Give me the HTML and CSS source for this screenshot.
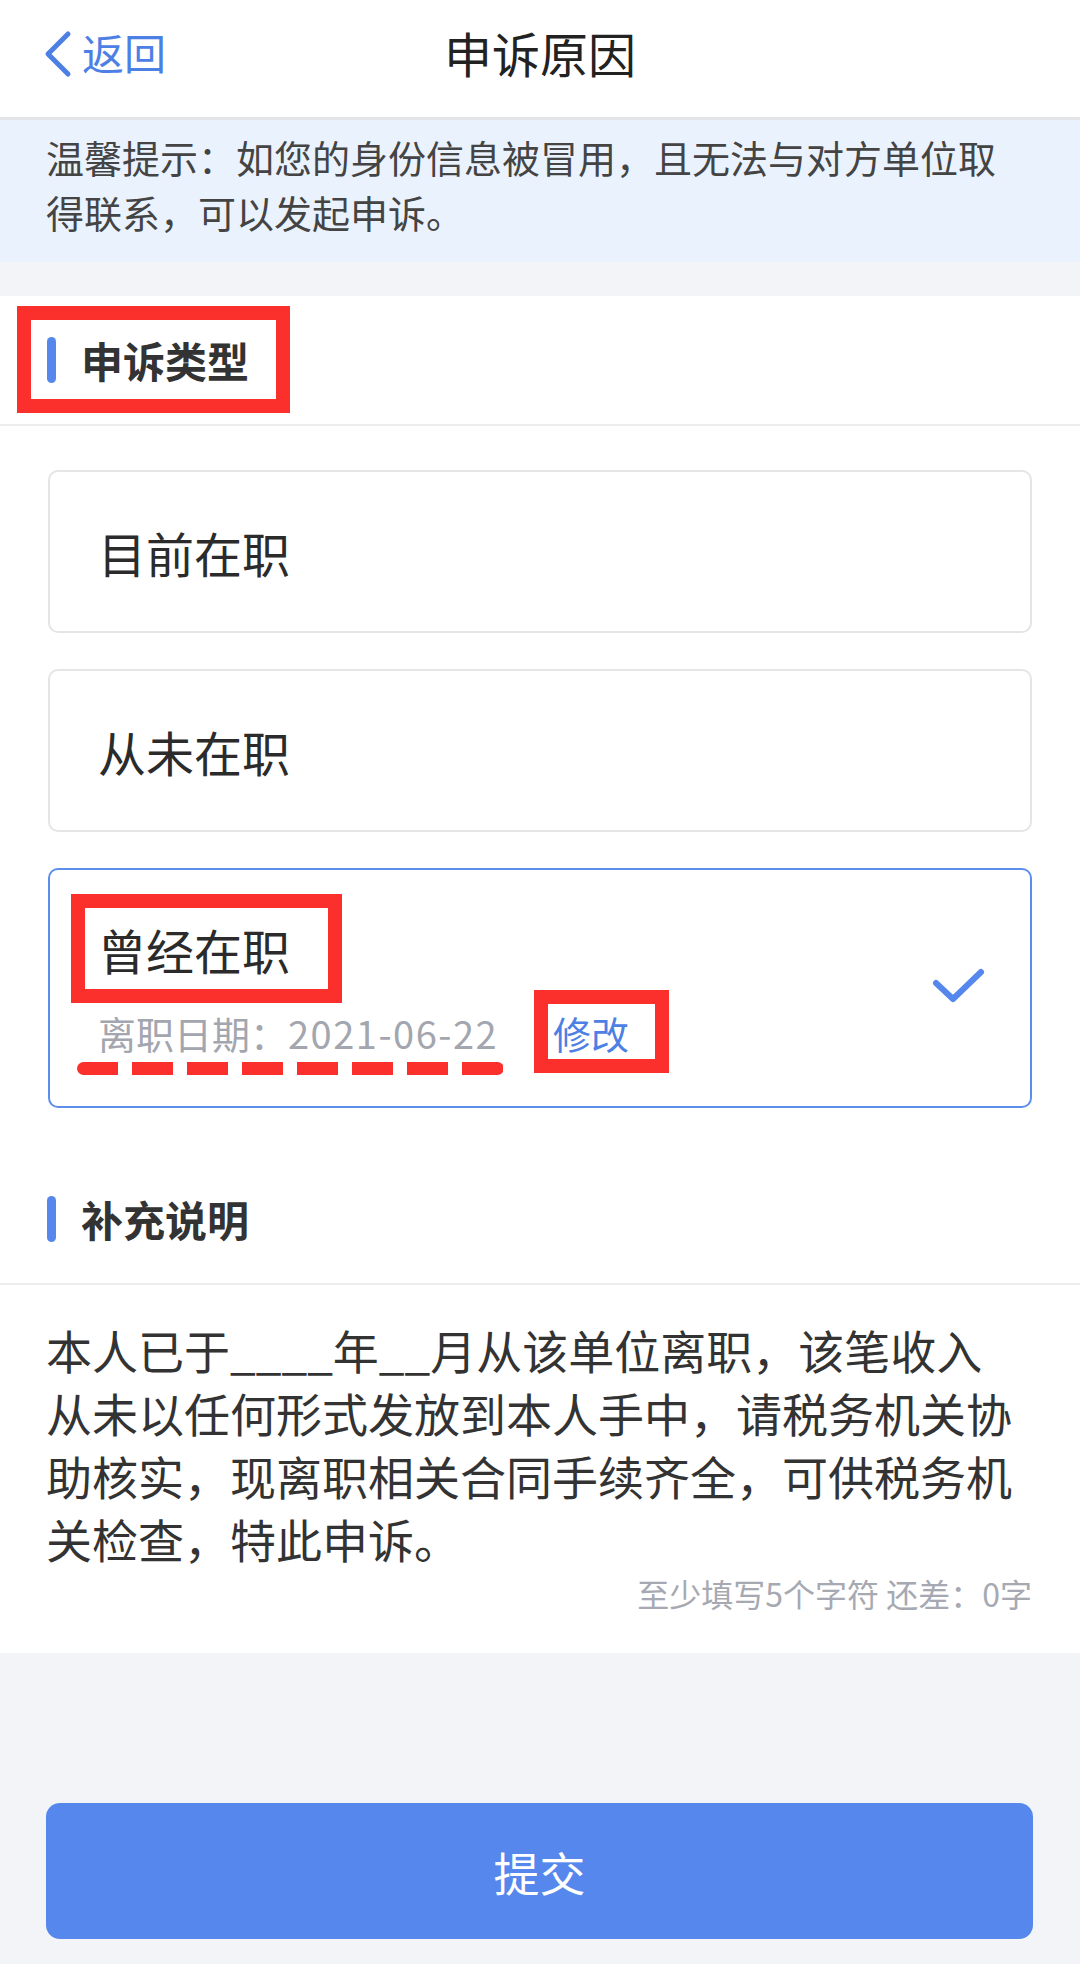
FILE: index.html
```html
<!DOCTYPE html>
<html lang="zh-CN">
<head>
<meta charset="utf-8">
<title>申诉原因</title>
<link rel="stylesheet" href="styles.css">
</head>
<body>
<div class="page">
  <header class="nav">
    <a class="back">
      <svg class="back-icon" width="30" height="48" viewBox="0 0 30 48"><path d="M26 4 L6 24 L26 44" fill="none" stroke="#4d80e4" stroke-width="5" stroke-linecap="round" stroke-linejoin="round"/></svg>
      <span class="back-text">返回</span>
    </a>
    <h1 class="title">申诉原因</h1>
    <span class="nav-spacer"></span>
  </header>

  <div class="tip">温馨提示：如您的身份信息被冒用，且无法与对方单位取得联系，可以发起申诉。</div>

  <section class="panel">
    <div class="sec-head anno-head">
      <i class="bar"></i><span class="sec-title">申诉类型</span>
    </div>

    <div class="options">
      <div class="opt"><span class="opt-label">目前在职</span></div>
      <div class="opt"><span class="opt-label">从未在职</span></div>
      <div class="opt opt-active">
        <div class="opt-main">
          <span class="opt-label anno-title">曾经在职</span>
          <div class="opt-sub">
            <span class="date anno-dash">离职日期：<span class="num">2021-06-22</span></span><a class="edit anno-edit">修改</a>
          </div>
        </div>
        <svg class="check" width="56" height="40" viewBox="0 0 56 40"><path d="M6 17 L23 33 L51 6" fill="none" stroke="#5587ec" stroke-width="6" stroke-linecap="round" stroke-linejoin="round"/></svg>
      </div>
    </div>

    <div class="sec-head sec-head-2">
      <i class="bar"></i><span class="sec-title">补充说明</span>
    </div>

    <div class="remark">
      <p class="remark-text">本人已于____年__月从该单位离职，该笔收入<br>从未以任何形式发放到本人手中，请税务机关协<br>助核实，现离职相关合同手续齐全，可供税务机<br>关检查，特此申诉。</p>
      <div class="counter">至少填写5个字符 还差：0字</div>
    </div>
  </section>

  <div class="footer">
    <button class="submit">提交</button>
  </div>
</div>
</body>
</html>
```

FILE: styles.css
```css
*,
*::before,
*::after {
  box-sizing: border-box;
}

html, body {
  margin: 0;
  padding: 0;
}

body {
  background: #f3f4f8;
  font-family: "Noto Sans CJK SC", "Noto Sans", sans-serif;
  color: #333;
}

.page {
  width: 1080px;
  min-height: 1964px;
  background: #f3f4f8;
}

/* ---------- nav ---------- */
.nav {
  height: 120px;
  background: #fff;
  border-bottom: 3px solid #e3e4e8;
  display: grid;
  grid-template-columns: 1fr auto 1fr;
  align-items: center;
  padding-bottom: 14px;
}

.back {
  display: flex;
  align-items: center;
  padding-left: 42px;
  color: #4d80e4;
}

.back-icon {
  display: block;
  margin-top: 4px;
}

.back-text {
  margin-left: 10px;
  font-size: 42px;
  line-height: 48px;
}

.title {
  margin: 0;
  font-size: 48px;
  line-height: 60px;
  font-weight: 400;
  color: #222;
}

/* ---------- tip ---------- */
.tip {
  background: #eaf2fd;
  padding: 9px 60px 23px 46px;
  font-size: 38px;
  line-height: 55px;
  color: #444;
  height: 142px;
}

/* ---------- panel ---------- */
.panel {
  margin-top: 34px;
  background: #fff;
}

.sec-head {
  position: relative;
  height: 130px;
  display: flex;
  align-items: center;
  padding-left: 47px;
  border-bottom: 2px solid #ededf0;
}

.sec-head-2 {
  margin-top: 47px;
}

.bar {
  display: block;
  width: 9px;
  height: 46px;
  border-radius: 5px;
  background: #5587ec;
}

.sec-title {
  margin-left: 25px;
  font-size: 42px;
  font-weight: 700;
  color: #333;
  line-height: 50px;
}

/* ---------- options ---------- */
.options {
  padding: 44px 48px 0;
  display: flex;
  flex-direction: column;
  gap: 36px;
}

.opt {
  height: 163px;
  border: 2px solid #e5e5e8;
  border-radius: 10px;
  display: flex;
  align-items: center;
  padding: 0 44px 0 48px;
}

.opt-label {
  font-size: 48px;
  line-height: 60px;
  color: #2b2b2b;
}

.opt-active {
  height: 240px;
  border-color: #5c8eeb;
  justify-content: space-between;
  align-items: center;
}

.opt-main {
  display: flex;
  flex-direction: column;
  align-items: flex-start;
}

.opt-sub {
  margin-top: 29px;
  display: flex;
  align-items: center;
  font-size: 38px;
  line-height: 50px;
}

.date {
  color: #a3a6ae;
}

.num {
  letter-spacing: 1.5px;
}

.edit {
  margin-left: 55px;
  color: #4d80e4;
}

.check {
  display: block;
  margin-top: -4px;
}

/* ---------- remark ---------- */
.remark {
  padding: 33px 48px 40px 46px;
}

.remark-text {
  margin: 0;
  font-size: 46px;
  line-height: 63px;
  color: #333;
  white-space: nowrap;
}

.counter {
  margin-top: 3px;
  text-align: right;
  font-size: 32px;
  line-height: 40px;
  color: #a6a9b1;
}

/* ---------- footer ---------- */
.footer {
  padding: 150px 47px 0 46px;
}

.submit {
  display: block;
  width: 100%;
  height: 136px;
  border: none;
  border-radius: 14px;
  background: #5587ec;
  color: #fff;
  font-family: "Noto Sans CJK SC", sans-serif;
  font-size: 46px;
}

/* ---------- red annotations (overlays) ---------- */
.anno-head::after,
.anno-title::after,
.anno-edit::after,
.anno-dash::after {
  content: "";
  position: absolute;
  pointer-events: none;
}

.anno-head::after {
  left: 17px;
  top: 10px;
  width: 273px;
  height: 107px;
  border: 14px solid #fb2f2b;
}

.anno-title,
.anno-edit,
.anno-dash {
  position: relative;
}

.anno-title::after {
  left: -27px;
  top: -25px;
  width: 271px;
  height: 109px;
  border: 14px solid #fb2f2b;
}

.anno-edit::after {
  left: -19px;
  top: -18px;
  width: 135px;
  height: 83px;
  border: 14px solid #fb2f2b;
}

.anno-dash::after {
  left: -21px;
  top: 54px;
  width: 427px;
  height: 13px;
  border-radius: 7px;
  background: repeating-linear-gradient(90deg, #fb2f2b 0 41px, transparent 41px 55px);
}
```
